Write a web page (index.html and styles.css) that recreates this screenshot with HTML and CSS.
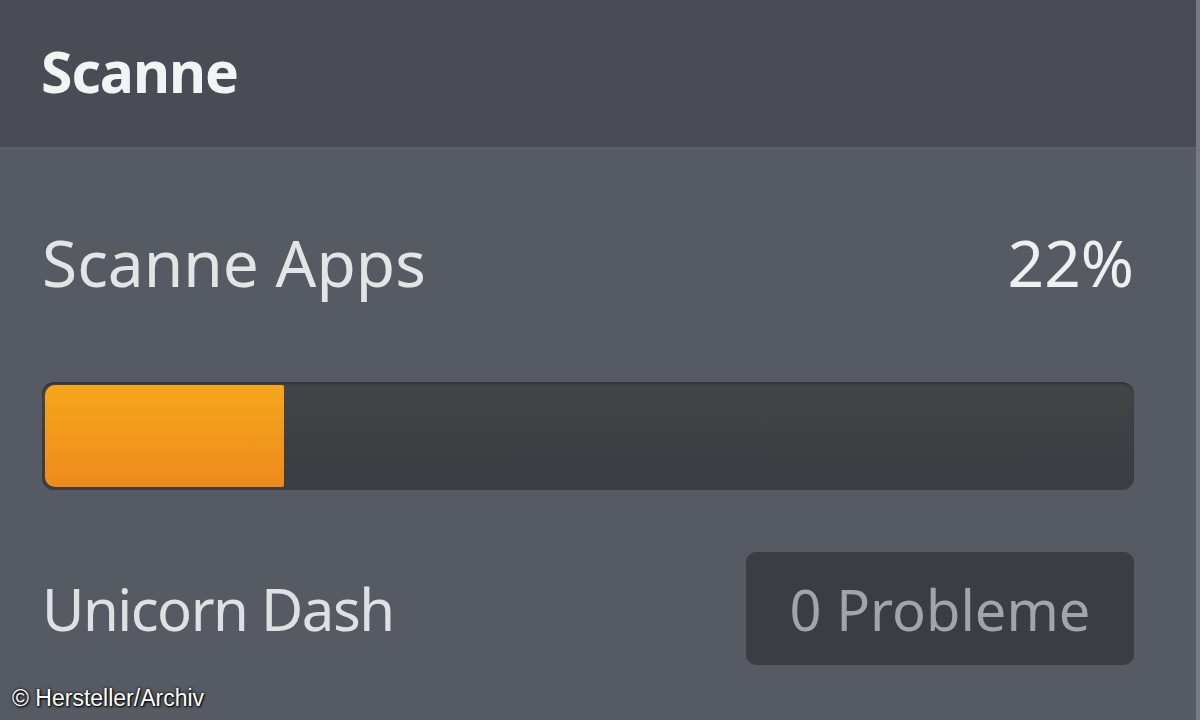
FILE: index.html
```html
<!DOCTYPE html>
<html lang="de">
<head>
<meta charset="utf-8">
<link rel="stylesheet" href="styles.css">
</head>
<body>
<div class="screen">
  <header class="header">
    <h1 class="title">Scanne</h1>
  </header>
  <main class="content">
    <div class="row row-scan">
      <span class="label">Scanne Apps</span>
      <span class="percent">22%</span>
    </div>
    <div class="track">
      <div class="fill" style="width: 22%"></div>
    </div>
    <div class="row row-app">
      <span class="label app-name">Unicorn Dash</span>
      <span class="badge">0 Probleme</span>
    </div>
  </main>
  <div class="edge"></div>
  <div class="credit">© Hersteller/Archiv</div>
</div>
</body>
</html>
```
FILE: styles.css
```css
html, body {
  margin: 0;
  padding: 0;
}
body {
  width: 1200px;
  height: 720px;
  overflow: hidden;
  background: #565a62;
  font-family: "Noto Sans", "Open Sans", sans-serif;
}
.screen {
  position: relative;
  width: 1200px;
  height: 720px;
  display: flex;
  flex-direction: column;
}
.header {
  height: 150px;
  background: #494c54;
  border-bottom: 3px solid #5b5f67;
  display: flex;
  align-items: center;
  padding-left: 41px;
  box-sizing: border-box;
}
.title {
  margin: 0;
  color: #f2f3f4;
  font-size: 57px;
  font-weight: 700;
  letter-spacing: -1px;
  line-height: 1;
  margin-top: -4px;
}
.content {
  flex: 1;
  padding: 0 66px 0 42px;
  display: flex;
  flex-direction: column;
}
.row {
  display: flex;
  justify-content: space-between;
  align-items: center;
}
.row-scan {
  margin-top: 78px;
  height: 70px;
}
.label {
  color: #e3e4e6;
  font-size: 64px;
  line-height: 1;
}
.percent {
  color: #eeeff0;
  font-size: 64px;
  line-height: 1;
}
.track {
  margin-top: 84px;
  height: 108px;
  border-radius: 12px;
  background: linear-gradient(#424448, #3b3c41);
  box-shadow: inset 0 2px 2px rgba(0,0,0,0.25);
  padding: 3px;
  box-sizing: border-box;
}
.fill {
  height: 100%;
  border-radius: 10px 2px 2px 10px;
  background: linear-gradient(#f6a61b, #ee8a1e);
}
.row-app {
  margin-top: 62px;
}
.app-name {
  font-size: 58px;
  letter-spacing: -1.5px;
  color: #dfe0e3;
}
.badge {
  width: 388px;
  height: 113px;
  box-sizing: border-box;
  background: #3c3d42;
  border-radius: 10px;
  color: #a1a4a8;
  font-size: 56px;
  display: flex;
  align-items: center;
  justify-content: center;
}
.edge {
  position: absolute;
  top: 0;
  right: 0;
  width: 4px;
  bottom: 0;
  background: #777a80;
}
.credit {
  position: absolute;
  left: 12px;
  bottom: 8px;
  color: #ffffff;
  font-family: "Liberation Sans", Arial, sans-serif;
  font-size: 23px;
  text-shadow: 0 0 3px #000, 1px 1px 2px #000;
}
```
